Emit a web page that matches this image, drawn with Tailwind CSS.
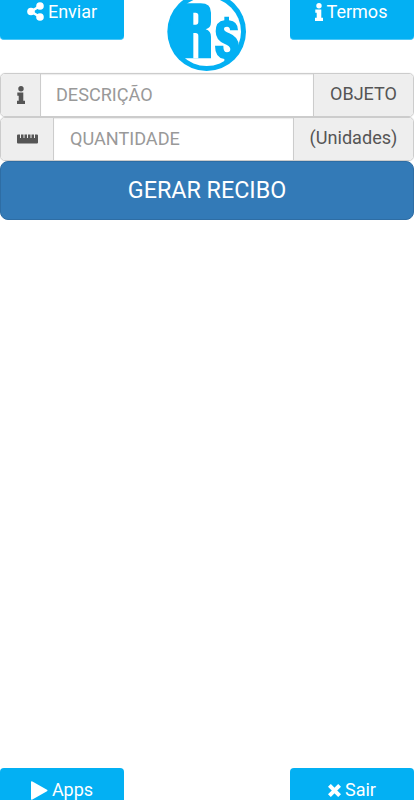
<!DOCTYPE html>
<html lang="pt-BR">
<head>
  <meta charset="UTF-8" />
  <meta name="viewport" content="width=device-width, initial-scale=1" />
  <title>Gerar Recibo</title>
  <script src="https://cdn.jsdelivr.net/npm/@tailwindcss/browser@4"></script>
</head>
<body class="bg-white font-[Roboto,sans-serif] text-[18px] leading-6">
  <div class="h-screen flex flex-col justify-between overflow-hidden">
    <div>
      <!-- Top bar -->
      <header class="h-[72px] flex justify-between items-start">
        <button class="w-[124px] h-10 pb-[16px] flex items-center justify-center gap-1 bg-[#03b0f3] border-b border-[#4cc7f7] text-white rounded-b-[4px]">
          <svg class="w-[17px] h-[19px]" viewBox="0 0 17 19" fill="currentColor">
            <circle cx="13" cy="4" r="3.8" />
            <circle cx="4" cy="9.5" r="3.8" />
            <circle cx="13" cy="15" r="3.8" />
            <path d="M13 4L4 9.5L13 15" fill="none" stroke="currentColor" stroke-width="2.6" />
          </svg>
          <span>Enviar</span>
        </button>

        <!-- Logo -->
        <svg class="w-[79px] h-[71px] mr-px" viewBox="36 0 237 213">
          <circle cx="155" cy="95" r="118" fill="#03b0f3" />
          <circle cx="155" cy="95" r="103" fill="#fff" />
          <path fill="#03b0f3" d="M90 10H137Q168 10 168 38V66Q168 84 152 88Q168 93 168 110V175H88Q44 150 44 95Q44 40 90 10Z" />
          <path fill="#fff" d="M115 38H122Q130 38 130 46V65Q130 74 122 74H115ZM115 99H122Q130 99 130 107V175H115Z" />
          <path fill="#03b0f3" d="M208 50H222V61Q249 64 249 91H225Q225 80 216 80Q207 80 207 87Q207 94 223 100Q252 111 252 140Q252 172 222 177V188H208V177Q180 173 180 137H205Q205 157 216 157Q226 157 226 147Q226 138 208 131Q182 121 182 94Q182 64 208 61Z" />
        </svg>

        <button class="w-[124px] h-10 pb-[16px] pr-[2px] flex items-center justify-center gap-1 bg-[#03b0f3] border-b border-[#4cc7f7] text-white rounded-b-[4px]">
          <svg class="w-2 h-[18px]" viewBox="0 0 8 18" fill="currentColor">
            <circle cx="4" cy="2.7" r="2.7" />
            <path d="M.3 6.5H6.3V14.8H8V18H0V14.8H1.7V9.7H.3Z" />
          </svg>
          <span>Termos</span>
        </button>
      </header>

      <!-- Form -->
      <form class="pt-[0.5px]">
        <div class="h-11 flex border border-[#ccc] rounded-[5px] overflow-hidden shadow-[0_0_1px_#ccc]">
          <span class="w-10 flex items-center justify-center bg-[#eee] border-r border-[#ccc] text-[#555]">
            <svg class="w-2 h-[18px]" viewBox="0 0 8 18" fill="currentColor">
              <circle cx="4" cy="2.7" r="2.7" />
              <path d="M.3 6.5H6.3V14.8H8V18H0V14.8H1.7V9.7H.3Z" />
            </svg>
          </span>
          <input type="text" placeholder="DESCRIÇÃO" class="flex-1 min-w-0 px-[15px] text-[18.1px] placeholder:text-[#999] outline-none shadow-[inset_0_1px_1px_rgba(0,0,0,0.08)]" />
          <span class="w-[100px] pb-px flex items-center justify-center bg-[#eee] border-l border-[#ccc] text-[#555]">OBJETO</span>
        </div>
        <div class="h-11 flex border border-[#ccc] rounded-[5px] overflow-hidden shadow-[0_0_1px_#ccc]">
          <span class="w-[53px] flex items-center justify-center bg-[#eee] border-r border-[#ccc] text-[#555]">
            <svg class="w-[21px] h-[10px]" viewBox="0 0 21 10" fill="currentColor">
              <path d="M1 .5H3V4H4V.5H6.5V4H7.5V.5H10V4H11V.5H13.5V4H14.5V.5H17V4H18V.5H20Q21 .5 21 1.5V8.5Q21 9.5 20 9.5H1Q0 9.5 0 8.5V1.5Q0 .5 1 .5Z" />
            </svg>
          </span>
          <input type="text" placeholder="QUANTIDADE" class="flex-1 min-w-0 px-4 text-[18.1px] placeholder:text-[#999] outline-none shadow-[inset_0_1px_1px_rgba(0,0,0,0.08)]" />
          <span class="w-[120px] pb-px flex items-center justify-center bg-[#eee] border-l border-[#ccc] text-[#555] text-[18.1px]">(Unidades)</span>
        </div>
        <button type="button" class="w-full h-[59.5px] block bg-[#337ab7] border border-[#2e6da4] rounded-[8px] text-white text-[23.3px]">GERAR RECIBO</button>
      </form>
    </div>

    <!-- Bottom bar -->
    <footer class="h-8 flex justify-between">
      <button class="w-[124px] h-11 flex items-center justify-center gap-1 bg-[#03b0f3] text-white rounded-t-[4px]">
        <svg class="w-[17px] h-[19px]" viewBox="0 0 17 19" fill="currentColor">
          <path d="M0 1.2Q0 -.3 1.4 .5L16 8.8Q17 9.5 16 10.2L1.4 18.5Q0 19.3 0 17.8Z" />
        </svg>
        <span>Apps</span>
      </button>
      <button class="w-[124px] h-11 flex items-center justify-center gap-1 bg-[#03b0f3] text-white rounded-t-[4px]">
        <svg class="w-[13px] h-[13px]" viewBox="0 0 13 13" fill="none" stroke="currentColor" stroke-width="4">
          <path d="M1.4 1.4L11.6 11.6M11.6 1.4L1.4 11.6" />
        </svg>
        <span>Sair</span>
      </button>
    </footer>
  </div>
</body>
</html>
